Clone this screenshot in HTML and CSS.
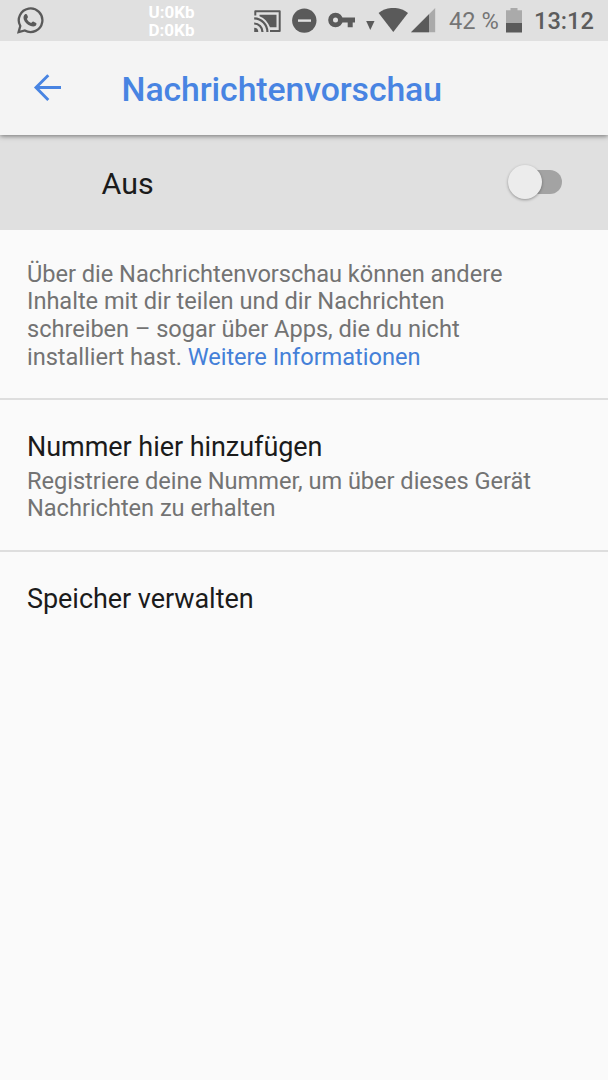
FILE: index.html
```html
<!DOCTYPE html>
<html lang="de">
<head>
<meta charset="utf-8">
<title>Nachrichtenvorschau</title>
<link rel="stylesheet" href="styles.css">
</head>
<body>
<div class="status-bar">
  <svg class="icon-chat" viewBox="16 6 28 28" width="28" height="28">
    <path d="M18.600 32.100 20.300 26A11.800 11.800 0 1 1 24.800 30.500Z" fill="none" stroke="#5a5a5a" stroke-width="2.300"/>
    <path d="M25.300 14.100c.8-.3 1.400-.2 1.800.7l.8 2c.3.8-.8 1.500-1 2.100.8 1.800 2.400 3.300 4.300 4 .7-.2 1.300-1.500 2-1.300l2.900 1.400c.8.400.2 2.200-.5 2.800-1.500 1.100-3.300.9-5.500-.1-2.800-1.300-5.300-3.600-6.300-6.300-.7-2-.1-4.300 1.500-5.300z" fill="#5a5a5a"/>
  </svg>
  <div class="traffic"><span>U:0Kb</span><span>D:0Kb</span></div>
  <svg class="icon-cast" viewBox="254 9 28 24" width="28" height="24">
    <path d="M255.300 15.500V11.200H279.700V30.900H270" fill="none" stroke="#5a5a5a" stroke-width="2" stroke-linejoin="round"/>
    <path d="M259.500 14.800H276.500V27.300H270C268 22 264.500 18.300 259.500 16.200Z" fill="#5a5a5a"/>
    <path d="M254.200 18.400A13.500 13.500 0 0 1 267.400 32M254.200 23.500A8.600 8.600 0 0 1 262.500 32" fill="none" stroke="#5a5a5a" stroke-width="2.200"/>
    <path d="M254.200 27.800A4.200 4.200 0 0 1 258.300 32H254.200Z" fill="#5a5a5a"/>
  </svg>
  <svg class="icon-dnd" viewBox="292 8 25 25" width="25" height="25">
    <circle cx="304.300" cy="20.600" r="12.200" fill="#5a5a5a"/>
    <path d="M298 20.600H311" stroke="#e0e0e0" stroke-width="2.400"/>
  </svg>
  <svg class="icon-key" viewBox="328 12 28 16" width="28" height="16">
    <circle cx="335.500" cy="20" r="4.900" fill="none" stroke="#5a5a5a" stroke-width="4.800"/>
    <path d="M341 17.500H355V22.500H352.700V27.300H347.700V22.500H341Z" fill="#5a5a5a"/>
  </svg>
  <svg class="icon-wifi" viewBox="366 8 43 25" width="43" height="25">
    <path d="M366.200 21H374.500L370.300 30Z" fill="#5a5a5a"/>
    <path d="M378.600 13C387 6.200 399.600 6.200 408 13L393.300 32Z" fill="#5a5a5a"/>
  </svg>
  <svg class="icon-signal" viewBox="411 8 25 25" width="25" height="25">
    <path d="M411 32.300 435.200 8V32.300Z" fill="#aaa"/>
    <path d="M411 32.300 429 14.200V32.300Z" fill="#5a5a5a"/>
  </svg>
  <span class="percent">42 %</span>
  <svg class="icon-battery" viewBox="506 8 16 25" width="16" height="25">
    <path d="M506 10.300H510.500V8H517.500V10.300H522V23H506Z" fill="#aaa"/>
    <path d="M506 23H522V32.500H506Z" fill="#5a5a5a"/>
  </svg>
  <span class="clock">13:12</span>
</div>
<header class="toolbar">
  <svg class="back" viewBox="33 73 30 30" width="30" height="30">
    <path d="M61 87.500H36M48.300 75.300 36 87.500 48.300 99.900" fill="none" stroke="#4884e2" stroke-width="2.900"/>
  </svg>
  <h1>Nachrichtenvorschau</h1>
</header>
<main>
  <section class="switch-row">
    <span class="state">Aus</span>
    <span class="switch"><span class="thumb"></span></span>
  </section>
  <section class="row info">
    <p>Über die Nachrichtenvorschau können andere<br>Inhalte mit dir teilen und dir Nachrichten<br>schreiben – sogar über Apps, die du nicht<br>installiert hast. <a>Weitere Informationen</a></p>
  </section>
  <section class="row number">
    <h2>Nummer hier hinzufügen</h2>
    <p>Registriere deine Nummer, um über dieses Gerät<br>Nachrichten zu erhalten</p>
  </section>
  <section class="row last">
    <h2>Speicher verwalten</h2>
  </section>
</main>
</body>
</html>
```

FILE: styles.css
```css
* { box-sizing: border-box; }
body {
  margin: 0;
  width: 608px;
  height: 1080px;
  overflow: hidden;
  background: #fafafa;
  font-family: Roboto, sans-serif;
  color: #1b1b1b;
}
h1, h2, p { margin: 0; font-weight: 400; }
svg { display: block; flex: none; }

.status-bar {
  display: flex;
  align-items: flex-start;
  height: 41px;
  padding-left: 16px;
  background: #e0e0e0;
  white-space: nowrap;
}
.icon-chat { margin-top: 6px; }
.traffic {
  display: flex;
  flex-direction: column;
  width: 52px;
  margin: 3px 0 0 104.5px;
  font-size: 17px;
  font-weight: 700;
  line-height: 18px;
  color: #fff;
}
.icon-cast { margin: 9px 0 0 53.5px; }
.icon-dnd { margin: 8px 0 0 10px; }
.icon-key { margin: 12px 0 0 11px; }
.icon-wifi { margin: 8px 0 0 10px; }
.icon-signal { margin: 8px 0 0 2px; }
.percent {
  width: 57px;
  margin: 7px 0 0 13px;
  font-size: 23.64px;
  line-height: 28px;
  color: #757575;
}
.icon-battery { margin-top: 8px; }
.clock {
  margin: 7px 0 0 12px;
  font-size: 23.64px;
  font-weight: 500;
  line-height: 28px;
  color: #5c5c5c;
}

.toolbar {
  position: relative;
  display: flex;
  align-items: center;
  height: 94px;
  padding-left: 33px;
  background: #f4f4f4;
  box-shadow: 0 1px 5px rgba(0, 0, 0, .5);
  clip-path: inset(0 0 -12px 0);
}
.toolbar h1 {
  margin: 4px 0 0 58.5px;
  font-size: 33.78px;
  font-weight: 500;
  line-height: 40px;
  letter-spacing: -.08px;
  color: #4884e2;
}

.switch-row {
  display: flex;
  align-items: center;
  justify-content: space-between;
  height: 94.5px;
  padding: 0 46px 0 101.5px;
  background: #e0e0e0;
}
.state { margin-top: 4px; font-size: 30.4px; line-height: 36px; }
.switch {
  display: flex;
  align-items: center;
  width: 54px;
  height: 24px;
  background: linear-gradient(#a3a3a3, #a3a3a3) right / 40px 24px no-repeat;
  border-radius: 12px;
}
.thumb {
  width: 34px;
  height: 34px;
  border-radius: 50%;
  background: #ececec;
  box-shadow: 0 1px 3px rgba(0, 0, 0, .35);
}

.row {
  padding: 31px 27px 0;
  border-bottom: 2px solid #dedede;
}
.row p {
  font-size: 23.64px;
  line-height: 27.7px;
  letter-spacing: -.04px;
  color: #737373;
}
.row h2 {
  padding-top: 1px;
  font-size: 27px;
  line-height: 31.7px;
  letter-spacing: -.05px;
}
.row a { color: #4480d8; }
.info { height: 170.5px; }
.number { height: 151.5px; }
.number p { margin-top: 4px; }
.last { border-bottom: 0; }
```
